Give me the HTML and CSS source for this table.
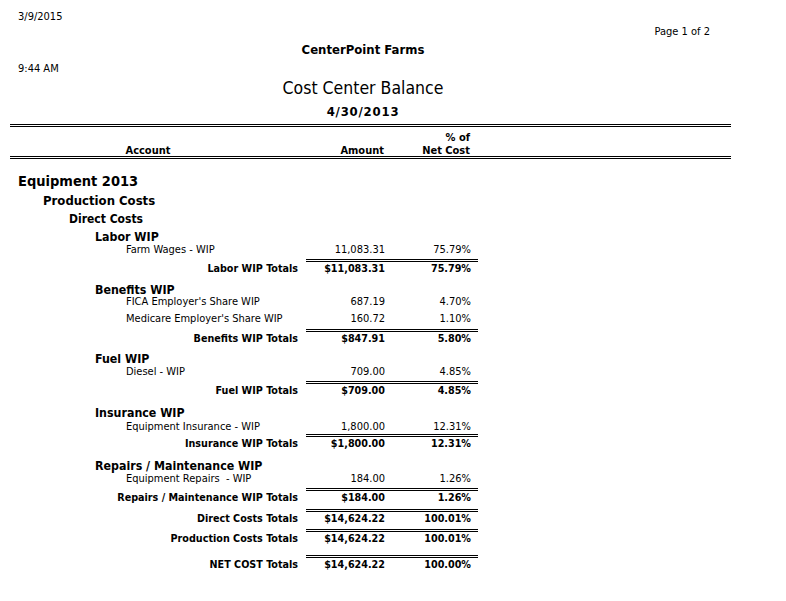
FILE: index.html
```html
<!DOCTYPE html>
<html lang="en">
<head>
<meta charset="utf-8">
<title>Cost Center Balance</title>
<link rel="stylesheet" href="styles.css">
</head>
<body>
<div class="page">
  <header class="hdr">
    <div class="hrow h-date">3/9/2015</div>
    <div class="hrow h-page">Page 1 of 2</div>
    <div class="hrow h-company">CenterPoint Farms</div>
    <div class="hrow h-time">9:44 AM</div>
    <div class="hrow h-title">Cost Center Balance</div>
    <div class="hrow h-asof">4/30/2013</div>
  </header>

  <div class="colhead">
    <div class="ch-account">Account</div>
    <div class="ch-amount">Amount</div>
    <div class="ch-pct">% of<br>Net Cost</div>
  </div>

  <div class="rows">
    <div class="row lvl0 s19"><span class="lbl">Equipment 2013</span></div>
    <div class="row lvl1 s18"><span class="lbl">Production Costs</span></div>
    <div class="row lvl2 s18"><span class="lbl">Direct Costs</span></div>

    <div class="row lvl3 s13"><span class="lbl">Labor WIP</span></div>
    <div class="row acct s16"><span class="lbl">Farm Wages - WIP</span><span class="amt">11,083.31</span><span class="pct">75.79%</span></div>
    <div class="row total s24"><span class="lbl">Labor WIP Totals</span><span class="amt">$11,083.31</span><span class="pct">75.79%</span></div>

    <div class="row lvl3 s12"><span class="lbl">Benefits WIP</span></div>
    <div class="row acct s17"><span class="lbl">FICA Employer's Share WIP</span><span class="amt">687.19</span><span class="pct">4.70%</span></div>
    <div class="row acct s17"><span class="lbl">Medicare Employer's Share WIP</span><span class="amt">160.72</span><span class="pct">1.10%</span></div>
    <div class="row total s23"><span class="lbl">Benefits WIP Totals</span><span class="amt">$847.91</span><span class="pct">5.80%</span></div>

    <div class="row lvl3 s13"><span class="lbl">Fuel WIP</span></div>
    <div class="row acct s16"><span class="lbl">Diesel - WIP</span><span class="amt">709.00</span><span class="pct">4.85%</span></div>
    <div class="row total s25"><span class="lbl">Fuel WIP Totals</span><span class="amt">$709.00</span><span class="pct">4.85%</span></div>

    <div class="row lvl3 s14"><span class="lbl">Insurance WIP</span></div>
    <div class="row acct s14"><span class="lbl">Equipment Insurance - WIP</span><span class="amt">1,800.00</span><span class="pct">12.31%</span></div>
    <div class="row total s25"><span class="lbl">Insurance WIP Totals</span><span class="amt">$1,800.00</span><span class="pct">12.31%</span></div>

    <div class="row lvl3 s13"><span class="lbl">Repairs / Maintenance WIP</span></div>
    <div class="row acct s16"><span class="lbl">Equipment Repairs &nbsp;- WIP</span><span class="amt">184.00</span><span class="pct">1.26%</span></div>
    <div class="row total s21"><span class="lbl">Repairs / Maintenance WIP Totals</span><span class="amt">$184.00</span><span class="pct">1.26%</span></div>

    <div class="row total s20"><span class="lbl">Direct Costs Totals</span><span class="amt">$14,624.22</span><span class="pct">100.01%</span></div>
    <div class="row total s26"><span class="lbl">Production Costs Totals</span><span class="amt">$14,624.22</span><span class="pct">100.01%</span></div>
    <div class="row total s20"><span class="lbl">NET COST Totals</span><span class="amt">$14,624.22</span><span class="pct">100.00%</span></div>
  </div>
</div>
</body>
</html>
```

FILE: styles.css
```css
html, body {
  margin: 0;
  padding: 0;
  background: #ffffff;
}

body {
  font-family: "DejaVu Sans Condensed", "DejaVu Sans", sans-serif;
  font-stretch: semi-condensed;
  color: #000000;
  font-size: 11px;
}

.page {
  width: 786px;
  padding-top: 9px;
}

/* ---------- report header ---------- */
.hdr {
  width: 726px;
}

.hrow {
  white-space: nowrap;
}

.h-date {
  height: 16px;
  line-height: 16px;
  padding-left: 18px;
}

.h-page {
  height: 14px;
  line-height: 14px;
  text-align: right;
  padding-right: 16px;
}

.h-company {
  height: 22px;
  line-height: 22px;
  text-align: center;
  font-weight: bold;
  font-size: 13px;
}

.h-time {
  height: 15px;
  line-height: 15px;
  padding-left: 18px;
}

.h-title {
  height: 25px;
  line-height: 25px;
  text-align: center;
  font-size: 17.5px;
}

.h-asof {
  height: 21px;
  line-height: 21px;
  text-align: center;
  font-weight: bold;
  font-size: 13px;
  letter-spacing: 0.8px;
}

/* ---------- column heading band ---------- */
.colhead {
  margin: 2px 0 0 10px;
  width: 721px;
  border-top: 3px double #000;
  border-bottom: 3px double #000;
  box-sizing: border-box;
  height: 35px;
  display: grid;
  grid-template-columns: 276px 98px 86px;
  align-items: end;
  font-weight: bold;
  font-size: 11px;
  line-height: 13px;
}

.ch-account {
  text-align: center;
  line-height: 10px;
}

.ch-amount {
  text-align: right;
  line-height: 10px;
}

.ch-pct {
  text-align: right;
  margin-bottom: -1px;
}

/* ---------- body rows ---------- */
.rows {
  padding-top: 16px;
}

.row {
  display: grid;
  grid-template-columns: 306px 86px 86px;
  line-height: 14px;
  white-space: nowrap;
  box-sizing: border-box;
}

.row .amt,
.row .pct {
  text-align: right;
  padding-right: 7px;
}

.lvl0 .lbl {
  padding-left: 18px;
  font-weight: bold;
  font-size: 14.5px;
  line-height: 12px;
}

.lvl1 .lbl {
  padding-left: 43px;
  font-weight: bold;
  font-size: 13px;
}

.lvl2 .lbl {
  padding-left: 69px;
  font-weight: bold;
  font-size: 12px;
}

.lvl3 .lbl {
  padding-left: 95px;
  font-weight: bold;
  font-size: 12.3px;
}

.acct .lbl {
  padding-left: 126px;
}

.total {
  font-weight: bold;
  font-size: 10.7px;
}

.total > span {
  border-top: 3px double #000;
}

.total .lbl {
  border-top-color: transparent;
  text-align: right;
  padding-right: 8px;
}

/* row heights (distance to the next row) */
.s12 { height: 12px; }
.s13 { height: 13px; }
.s14 { height: 14px; }
.s16 { height: 16px; }
.s17 { height: 17px; }
.s18 { height: 18px; }
.s19 { height: 19px; }
.s20 { height: 20px; }
.s21 { height: 21px; }
.s22 { height: 22px; }
.s23 { height: 23px; }
.s24 { height: 24px; }
.s25 { height: 25px; }
.s26 { height: 26px; }
```
